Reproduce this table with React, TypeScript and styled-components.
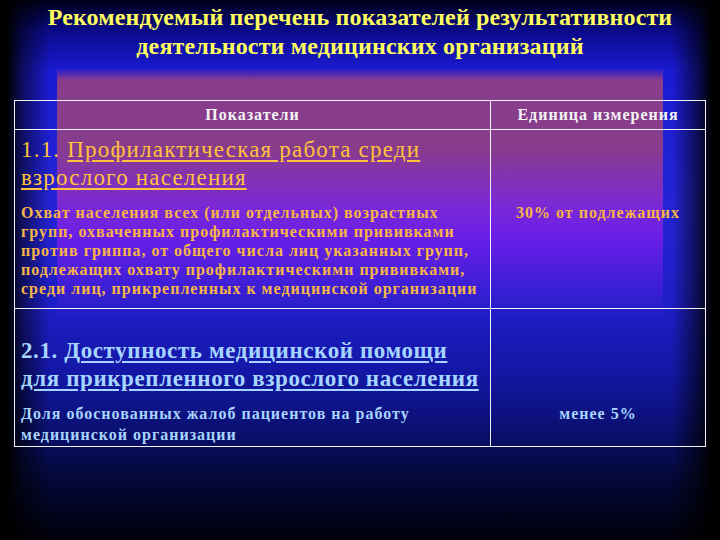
import React from "react";
import styled, { createGlobalStyle } from "styled-components";

const Global = createGlobalStyle`
  html, body { margin: 0; padding: 0; background: #000; }
  body { font-family: "Liberation Serif", "Times New Roman", serif; }
`;

const Slide = styled.div`
  width: 720px;
  height: 540px;
  box-sizing: border-box;
  overflow: hidden;
  padding-top: 3px;
  background:
    linear-gradient(to right, #000 0, #000 7px, rgba(0,0,0,0.55) 22px, rgba(0,0,0,0) 50px, rgba(0,0,0,0) 672px, rgba(0,0,0,0.6) 698px, #000 712px, #000 720px),
    linear-gradient(to bottom, rgba(138,60,142,0) 0, #883c8c 12px, #883c8c 80px, #7a28d8 140px, #6a1ee8 170px, rgba(40,30,215,0) 250px) 57px 68px / 606px 262px no-repeat,
    linear-gradient(to bottom, #00001a 0, #0a0a88 30px, #1a1ad2 70px, #2424d6 200px, #1e1ec6 310px, #1216a0 380px, #0a1070 430px, #040836 480px, #000008 540px);
`;

const Title = styled.h1`
  margin: 0;
  text-align: center;
  color: #ffff5e;
  font-family: "Liberation Serif", "Times New Roman", serif;
  font-weight: bold;
  font-size: 24px;
  letter-spacing: 0.15px;
  line-height: 29px;
`;

const Table = styled.div`
  margin: 39px 0 0 14px;
  width: 692px;
  box-sizing: border-box;
  border: 1.5px solid #f2f2f2;
  display: grid;
  grid-template-columns: 476px 1fr;
`;

const HeadCell = styled.div<{ $last?: boolean }>`
  height: 28px;
  display: flex;
  align-items: center;
  justify-content: center;
  color: #f4f4f4;
  font-weight: bold;
  font-size: 16px;
  letter-spacing: 1px;
  border-bottom: 1.5px solid #f2f2f2;
  border-right: ${(p) => (p.$last ? "none" : "1.5px solid #f2f2f2")};
`;

const Cell = styled.div<{ $last?: boolean; $bottom?: boolean; $pad?: number }>`
  box-sizing: border-box;
  padding: ${(p) => p.$pad ?? 0}px 6px 0 6px;
  border-right: ${(p) => (p.$last ? "none" : "1.5px solid #f2f2f2")};
  border-bottom: ${(p) => (p.$bottom ? "1.5px solid #f2f2f2" : "none")};
`;

const Heading = styled.div<{ $tone: "orange" | "blue" }>`
  color: ${(p) => (p.$tone === "orange" ? "#ffc23a" : "#a6d6ff")};
  font-weight: ${(p) => (p.$tone === "orange" ? "normal" : "bold")};
  font-size: 23px;
  letter-spacing: ${(p) => (p.$tone === "orange" ? "1.2px" : "0.6px")};
  line-height: 28px;
  white-space: nowrap;
  u { text-decoration-thickness: 2px; text-underline-offset: 3px; }
`;

const Body = styled.div<{ $tone: "orange" | "blue"; $lh: number; $gap: number }>`
  color: ${(p) => (p.$tone === "orange" ? "#f6b646" : "#a8d4ff")};
  font-weight: bold;
  font-size: 16px;
  letter-spacing: 1px;
  line-height: ${(p) => p.$lh}px;
  margin-top: ${(p) => p.$gap}px;
  white-space: nowrap;
`;

const Unit = styled.div<{ $tone: "orange" | "blue" }>`
  text-align: center;
  color: ${(p) => (p.$tone === "orange" ? "#f6b646" : "#a8d4ff")};
  font-weight: bold;
  font-size: 16px;
  letter-spacing: 1px;
  line-height: 19px;
`;

export default function App() {
  return (
    <>
      <Global />
      <Slide>
        <Title>
          Рекомендуемый перечень показателей результативности
          <br />
          деятельности медицинских организаций
        </Title>
        <Table>
          <HeadCell>Показатели</HeadCell>
          <HeadCell $last>Единица измерения</HeadCell>

          <Cell $bottom $pad={6} style={{ height: 179 }}>
            <Heading $tone="orange">
              1.1. <u>Профилактическая работа среди</u>
              <br />
              <u>взрослого населения</u>
            </Heading>
            <Body $tone="orange" $lh={19} $gap={11}>
              Охват населения всех (или отдельных) возрастных
              <br />
              групп, охваченных профилактическими прививками
              <br />
              против гриппа, от общего числа лиц указанных групп,
              <br />
              подлежащих охвату профилактическими прививками,
              <br />
              среди лиц, прикрепленных к медицинской организации
            </Body>
          </Cell>
          <Cell $last $bottom $pad={73}>
            <Unit $tone="orange">30% от подлежащих</Unit>
          </Cell>

          <Cell $pad={28} style={{ height: 137 }}>
            <Heading $tone="blue">
              2.1. <u>Доступность медицинской помощи</u>
              <br />
              <u>для прикрепленного взрослого населения</u>
            </Heading>
            <Body $tone="blue" $lh={21} $gap={10}>
              Доля обоснованных жалоб пациентов на работу
              <br />
              медицинской организации
            </Body>
          </Cell>
          <Cell $last $pad={95}>
            <Unit $tone="blue">менее 5%</Unit>
          </Cell>
        </Table>
      </Slide>
    </>
  );
}
